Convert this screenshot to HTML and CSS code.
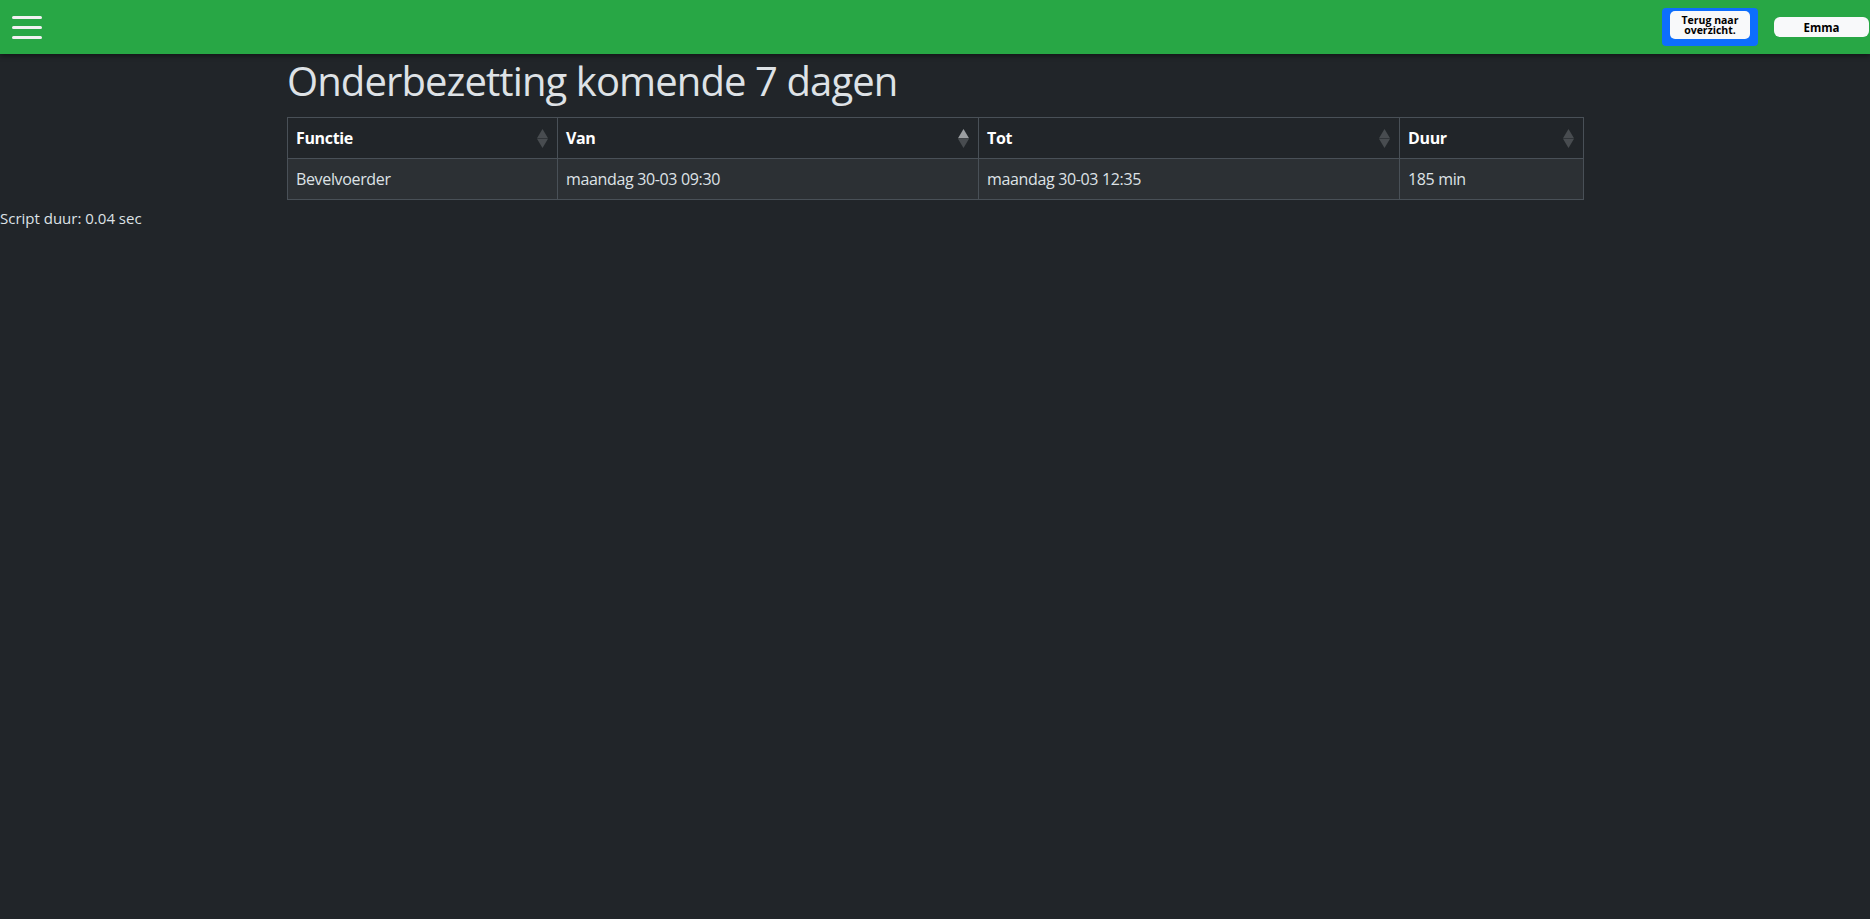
FILE: index.html
```html
<!DOCTYPE html>
<html>
<head>
    <title>Onderbezetting</title>
    <link rel="stylesheet" href="styles.css">
</head>
<body>
    <nav class="topbar">
        <button class="menu-toggle" aria-label="Menu">
            <span></span><span></span><span></span>
        </button>
        <div class="topbar-right">
            <div class="back-wrap">
                <button class="back-button">Terug naar overzicht.</button>
            </div>
            <button class="user-button">Emma</button>
        </div>
    </nav>

    <div class="container">
        <h1 class="page-title">Onderbezetting komende 7 dagen</h1>
        <table class="shift-table">
            <colgroup>
                <col class="col-functie">
                <col class="col-van">
                <col class="col-tot">
                <col class="col-duur">
            </colgroup>
            <thead>
                <tr>
                    <th><div class="th-inner">Functie<svg class="sort" viewBox="0 0 11 19"><polygon class="up" points="5.5,0 11,9.3 0,9.3"/><polygon class="down" points="0,9.7 11,9.7 5.5,19"/></svg></div></th>
                    <th><div class="th-inner">Van<svg class="sort asc" viewBox="0 0 11 19"><polygon class="up" points="5.5,0 11,9.3 0,9.3"/><polygon class="down" points="0,9.7 11,9.7 5.5,19"/></svg></div></th>
                    <th><div class="th-inner">Tot<svg class="sort" viewBox="0 0 11 19"><polygon class="up" points="5.5,0 11,9.3 0,9.3"/><polygon class="down" points="0,9.7 11,9.7 5.5,19"/></svg></div></th>
                    <th><div class="th-inner">Duur<svg class="sort" viewBox="0 0 11 19"><polygon class="up" points="5.5,0 11,9.3 0,9.3"/><polygon class="down" points="0,9.7 11,9.7 5.5,19"/></svg></div></th>
                </tr>
            </thead>
            <tbody>
                <tr>
                    <td>Bevelvoerder</td>
                    <td>maandag 30-03 09:30</td>
                    <td>maandag 30-03 12:35</td>
                    <td>185 min</td>
                </tr>
            </tbody>
        </table>
    </div>

    <div class="script-time">Script duur: 0.04 sec</div>
</body>
</html>
```

FILE: styles.css
```css
body {
    margin: 0;
    padding: 0;
    font-family: "Open Sans", "Noto Sans", sans-serif;
    font-size: 16px;
    line-height: 1.5;
    background-color: #212529;
    color: #dee2e6;
}
.topbar {
    height: 54px;
    background-color: #28a745;
    display: flex;
    align-items: center;
    padding: 0 1px 0 12px;
    box-shadow: 0 2px 5px rgba(0, 0, 0, 0.45);
    position: relative;
}
.menu-toggle {
    width: 30px;
    height: 23px;
    padding: 0;
    border: none;
    background: none;
    display: flex;
    flex-direction: column;
    justify-content: space-between;
    cursor: pointer;
}
.menu-toggle span {
    display: block;
    height: 3px;
    width: 30px;
    border-radius: 2px;
    background-color: #f1f1f1;
}
.topbar-right {
    margin-left: auto;
    display: flex;
    align-items: center;
    gap: 16px;
}
.back-wrap {
    background-color: #0d6efd;
    border-radius: 4px;
    padding: 3px 8px 7px;
    display: flex;
}
.back-button {
    width: 80px;
    height: 28px;
    border: none;
    border-radius: 5px;
    background-color: #f8f9fa;
    color: #000;
    font-family: "Open Sans", sans-serif;
    font-weight: 700;
    font-size: 10.5px;
    line-height: 10px;
    padding: 0 8px;
    cursor: pointer;
}
.user-button {
    width: 95px;
    height: 20px;
    border: none;
    border-radius: 6px;
    background-color: #f8f9fa;
    color: #000;
    font-family: "Open Sans", sans-serif;
    font-weight: 700;
    font-size: 11.5px;
    padding: 0;
    cursor: pointer;
}
.container {
    max-width: 1296px;
    margin: 0 auto;
}
.page-title {
    margin: 3px 0 12px;
    font-size: 40px;
    font-weight: 400;
    line-height: 48px;
    letter-spacing: -0.9px;
    color: #dee2e6;
}
.shift-table {
    width: 100%;
    table-layout: fixed;
    border-collapse: collapse;
    margin-bottom: 6px;
}
.col-functie { width: 270px; }
.col-van { width: 421px; }
.col-tot { width: 421px; }
.col-duur { width: 184px; }
.shift-table th,
.shift-table td {
    border: 1px solid #495057;
    padding: 8px;
    text-align: left;
    vertical-align: middle;
    white-space: nowrap;
    letter-spacing: -0.35px;
}
.shift-table th {
    background-color: #212529;
    color: #fff;
    font-weight: 700;
}
.shift-table td {
    background-color: #2c3034;
    color: #dee2e6;
}
.th-inner {
    display: flex;
    align-items: center;
    justify-content: space-between;
}
.sort {
    width: 11px;
    height: 19px;
    margin-right: 1px;
}
.sort polygon {
    fill: #484c50;
}
.sort.asc .up {
    fill: #9b9ea1;
}
.script-time {
    font-size: 15px;
    line-height: 24px;
    color: #dee2e6;
}
```
